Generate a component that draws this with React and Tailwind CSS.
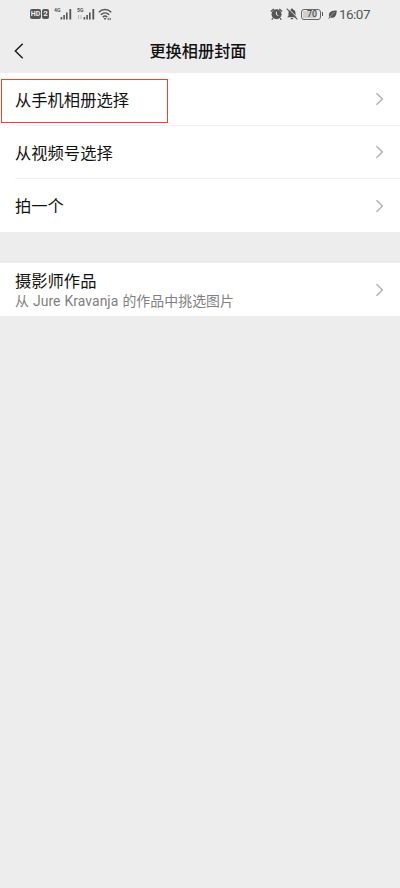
const OPTIONS = ["从手机相册选择", "从视频号选择", "拍一个"];

function Chevron() {
  return (
    <svg viewBox="0 0 10 14" className="w-[10px] h-[14px] shrink-0" fill="none" stroke="#b0b0b0" strokeWidth="1.4">
      <path d="M1.5 1.2 7.4 7 1.5 12.8" />
    </svg>
  );
}

function Signal({ label, faded }) {
  return (
    <svg viewBox="0 0 19 14" className="w-[19px] h-[14px]" fill="#555">
      <text x="0" y="5" fontSize="6" fontWeight="700" textLength="6.5" lengthAdjust="spacingAndGlyphs" fontFamily="Roboto, sans-serif">{label}</text>
      {faded && <path d="M1 8h1v4H1zM3.5 8h1v4h-1z" opacity=".35" />}
      <rect x="6.6" y="10" width="1.6" height="2.5" />
      <rect x="9.3" y="8" width="1.6" height="4.5" />
      <rect x="12" y="5.5" width="1.6" height="7" />
      <rect x="15.4" y="2" width="1.8" height="10.5" />
    </svg>
  );
}

function StatusBar() {
  return (
    <div className="flex h-7 items-center justify-between px-[30px] text-[#555]">
      <div className="flex items-center">
        <div className="flex h-[10px] w-[11px] items-center justify-center rounded-[2px] bg-[#555] text-[7px] font-bold leading-none text-[#ededed]">HD</div>
        <div className="ml-px flex h-[10px] w-[7px] items-center justify-center rounded-[2px] bg-[#555] text-[8px] font-bold leading-none text-[#ededed]">2</div>
        <div className="ml-[5px]"><Signal label="4G" /></div>
        <div className="ml-[4px]"><Signal label="5G" faded /></div>
        <svg viewBox="0 0 14 13" className="ml-[2px] h-[13px] w-[14px]" fill="none" stroke="#555" strokeWidth="1.5">
          <path d="M.8 4.2c3.6-3.6 8.8-3.6 12.4 0M2.8 6.7c2.5-2.4 5.9-2.4 8.4 0M4.8 9.1c1.3-1.2 3.1-1.2 4.4 0" />
          <path d="m5.7 10.6 1.3-.9 1.3.9L7 12z" fill="#555" stroke="none" />
          <path d="m10.7 9.500-1.500 1.500 1.500 1.500zM11.700 9.500l1.500 1.500-1.500 1.500z" fill="#555" stroke="none" />
        </svg>
      </div>

      <div className="flex items-center">
        <svg viewBox="0 0 13 12" className="h-3 w-[13px]">
          <circle cx="6.5" cy="6.2" r="5" fill="#555" />
          <path d="M.8 3.5 3.7.9M12.2 3.5 9.3.9M3 10.2l-1.3 1.4M10 10.2l1.3 1.4" stroke="#555" strokeWidth="1.3" />
          <path d="M6.4 3.6v3l2 1" fill="none" stroke="#ededed" strokeWidth="1" />
        </svg>
        <svg viewBox="0 0 12 12" className="ml-[3px] h-3 w-3">
          <path d="M6 .5c.7 0 1 .5 1 1 1.7.4 2.5 1.8 2.5 3.5v2.4l1.3 1.8H1.2l1.3-1.8V5c0-1.7.8-3.1 2.5-3.5 0-.5.3-1 1-1zM4.6 10h2.8c-.2.9-.7 1.4-1.4 1.4S4.8 10.9 4.6 10z" fill="#555" />
          <path d="M1.6 0 12 10.4" stroke="#ededed" strokeWidth="1" />
          <path d="m.7.7 10.6 10.6" stroke="#555" strokeWidth="1.1" />
        </svg>
        <div className="ml-[3px] flex h-[11px] w-5 items-center rounded-[3px] border border-[#666] p-px">
          <div className="flex h-full w-[13px] items-center whitespace-nowrap bg-[#cfcfcf] pl-[4px] text-[9px] font-medium leading-none">70</div>
        </div>
        <div className="ml-px h-1 w-px bg-[#555]" />
        <svg viewBox="0 0 9 9" className="ml-[5px] h-[9px] w-[9px]">
          <path d="M8.7.4C4.4.4.8 1.8.9 5.2c0 .7.2 1.2.5 1.700L.2 8.400l.6.4 1.300-1.300C6.700 8.900 8.700 5.400 8.700.4z" fill="#555" />
          <path d="M2 7c1-2 2.500-3.300 4.600-4.500" stroke="#ededed" strokeWidth=".5" fill="none" />
        </svg>
        <div className="ml-[2px] pt-px font-[Roboto] text-[13.5px] leading-none tracking-[-0.5px]">16:07</div>
      </div>
    </div>
  );
}

export default function App() {
  return (
    <div className="h-[888px] w-[400px] overflow-hidden bg-[#ededed] font-['Roboto','Noto_Sans_CJK_SC',sans-serif] text-[#111]">
      <StatusBar />

      <header className="grid h-[45px] grid-cols-[1fr_auto_1fr] items-center pl-[14px] pr-[18px]">
        <svg viewBox="0 0 10 16" className="h-4 w-[10px]" fill="none" stroke="#181818" strokeWidth="1.4">
          <path d="M8.7.7 1.3 8l7.4 7.3" />
        </svg>
        <h1 className="pt-[3px] text-[16.2px] font-medium leading-none">更换相册封面</h1>
      </header>

      <section className="bg-white">
        {OPTIONS.map((option, index) => (
          <div key={option} className="relative flex h-[53px] items-center pl-[15px]">
            <div className={`flex h-full flex-1 items-center justify-between pr-[15px] text-[16.3px] ${index < 2 ? "border-b border-[#f1f1f1]" : ""}`}>
              <span className={index < 2 ? "pt-[5px]" : "pt-[4px]"}>{option}</span>
              <Chevron />
            </div>
            {index === 0 && <div className="absolute left-px top-[6px] h-11 w-[167px] border border-[#ff3b30]" />}
          </div>
        ))}
      </section>

      <section className="mt-[31px] flex h-[53px] items-center justify-between bg-white px-[15px]">
        <div className="pt-[3px]">
          <div className="text-[16.3px] leading-[21px]">摄影师作品</div>
          <div className="-mt-px text-[13.9px] leading-5 tracking-[0.05px] [word-spacing:0.6px] text-[#808080]">从 Jure Kravanja 的作品中挑选图片</div>
        </div>
        <Chevron />
      </section>
    </div>
  );
}
